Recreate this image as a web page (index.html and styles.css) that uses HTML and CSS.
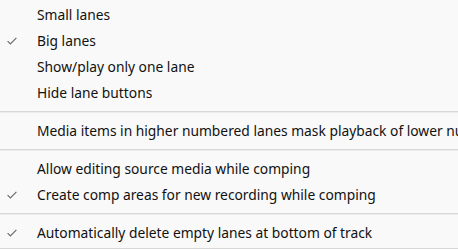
FILE: index.html
```html
<!DOCTYPE html>
<html lang="en">
<head>
  <meta charset="UTF-8">
  <title>Lane options</title>
  <link rel="stylesheet" href="styles.css">
</head>
<body>
  <div class="menu">
    <div class="menu-item">
      <span class="check"></span>
      <span class="label">Small lanes</span>
    </div>
    <div class="menu-item checked">
      <span class="check"><svg viewBox="0 0 10 8"><path d="M0.6 4.2 L3.4 7 L9.4 0.8"/></svg></span>
      <span class="label">Big lanes</span>
    </div>
    <div class="menu-item">
      <span class="check"></span>
      <span class="label">Show/play only one lane</span>
    </div>
    <div class="menu-item">
      <span class="check"></span>
      <span class="label">Hide lane buttons</span>
    </div>

    <div class="separator"></div>

    <div class="menu-item">
      <span class="check"></span>
      <span class="label">Media items in higher numbered lanes mask playback of lower numbered lanes</span>
    </div>

    <div class="separator"></div>

    <div class="menu-item">
      <span class="check"></span>
      <span class="label">Allow editing source media while comping</span>
    </div>
    <div class="menu-item checked">
      <span class="check"><svg viewBox="0 0 10 8"><path d="M0.6 4.2 L3.4 7 L9.4 0.8"/></svg></span>
      <span class="label">Create comp areas for new recording while comping</span>
    </div>

    <div class="separator"></div>

    <div class="menu-item checked">
      <span class="check"><svg viewBox="0 0 10 8"><path d="M0.6 4.2 L3.4 7 L9.4 0.8"/></svg></span>
      <span class="label">Automatically delete empty lanes at bottom of track</span>
    </div>

    <div class="separator last"></div>
  </div>
</body>
</html>
```

FILE: styles.css
```css
body {
  margin: 0;
  background-color: #f9f9f9;
  font-family: 'Noto Sans', 'Open Sans', sans-serif;
  font-size: 13.8px;
  color: #111;
  overflow: hidden;
}

.menu {
  display: flex;
  flex-direction: column;
  padding-top: 2px;
  width: 100%;
  white-space: nowrap;
}

.menu-item {
  display: flex;
  align-items: center;
  height: 26px;
}

.check {
  width: 37px;
  flex: none;
  display: flex;
  align-items: center;
  padding-left: 7px;
  box-sizing: border-box;
}

.check svg {
  width: 10px;
  height: 8px;
}

.check path {
  fill: none;
  stroke: #6b6b6b;
  stroke-width: 1.2;
}

.label {
  line-height: 26px;
}

.separator {
  height: 1px;
  background-color: #d7d7d7;
  border-bottom: 1px solid #ececec;
  margin: 5px 0 5px 0;
}

.separator.last {
  margin-top: 2px;
}
```
